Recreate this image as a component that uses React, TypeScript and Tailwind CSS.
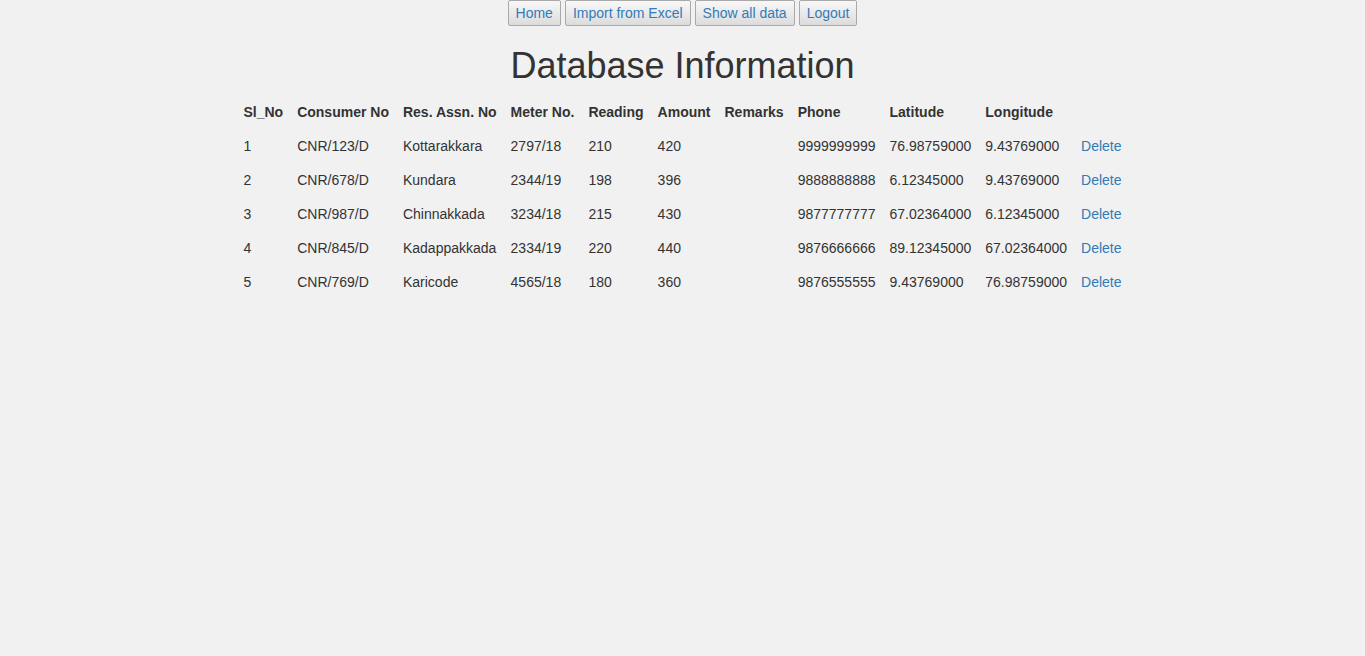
const rows = [
  ['1', 'CNR/123/D', 'Kottarakkara', '2797/18', '210', '420', '', '9999999999', '76.98759000', '9.43769000'],
  ['2', 'CNR/678/D', 'Kundara', '2344/19', '198', '396', '', '9888888888', '6.12345000', '9.43769000'],
  ['3', 'CNR/987/D', 'Chinnakkada', '3234/18', '215', '430', '', '9877777777', '67.02364000', '6.12345000'],
  ['4', 'CNR/845/D', 'Kadappakkada', '2334/19', '220', '440', '', '9876666666', '89.12345000', '67.02364000'],
  ['5', 'CNR/769/D', 'Karicode', '4565/18', '180', '360', '', '9876555555', '9.43769000', '76.98759000'],
]

const headers = ['Sl_No', 'Consumer No', 'Res. Assn. No', 'Meter No.', 'Reading', 'Amount', 'Remarks', 'Phone', 'Latitude', 'Longitude', '']

const navItems = ['Home', 'Import from Excel', 'Show all data', 'Logout']

export default function App() {
  return (
    <div className="min-h-screen bg-[#f1f1f1] text-[14px] leading-[20px] text-[#333333] font-['Liberation_Sans',Arial,sans-serif]">
      {/* Nav buttons */}
      <div className="flex justify-center gap-[4px]">
        {navItems.map((item) => (
          <button
            key={item}
            className="h-[26px] px-[7px] border border-[#a9a9a9] rounded-[2px] bg-gradient-to-b from-[#f8f8f8] to-[#dcdcdc] text-[#337ab7] text-[14px]"
          >
            {item}
          </button>
        ))}
      </div>

      <h1 className="mt-[20px] mb-[9px] text-center text-[36px] leading-[40px] font-normal text-[#333333]">
        Database Information
      </h1>

      <table className="mx-auto border-collapse">
        <thead>
          <tr>
            {headers.map((h, i) => (
              <th key={i} className="py-[7px] px-[7px] text-left font-bold">
                {h}
              </th>
            ))}
          </tr>
        </thead>
        <tbody>
          {rows.map((r) => (
            <tr key={r[0]}>
              {r.map((c, i) => (
                <td key={i} className="py-[7px] px-[7px] whitespace-nowrap">
                  {c}
                </td>
              ))}
              <td className="py-[7px] px-[7px]">
                <a href="#" className="text-[#337ab7]">Delete</a>
              </td>
            </tr>
          ))}
        </tbody>
      </table>
    </div>
  )
}
